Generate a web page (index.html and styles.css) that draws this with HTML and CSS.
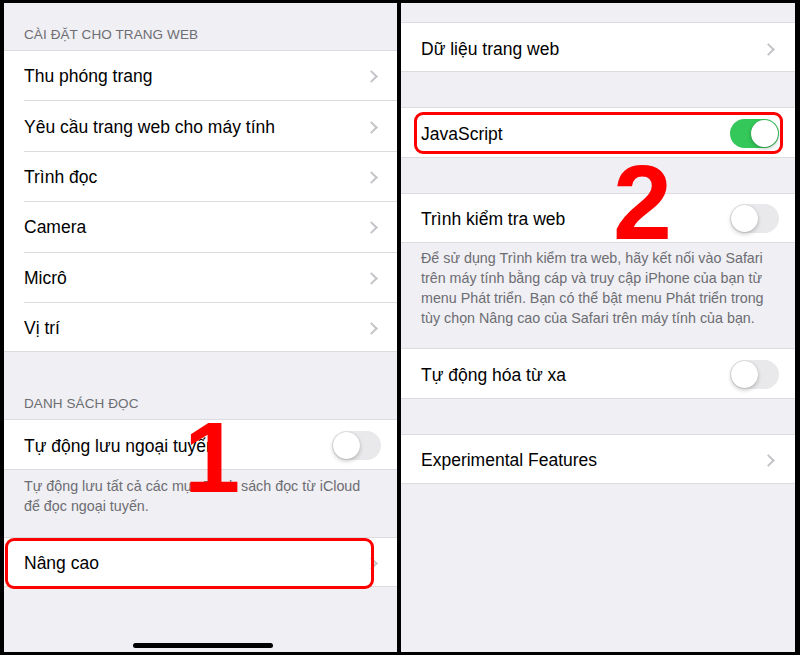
FILE: index.html
```html
<!DOCTYPE html>
<html lang="vi">
<head>
<meta charset="utf-8">
<link rel="stylesheet" href="styles.css">
</head>
<body>
<div class="frame">
  <section class="panel">
    <div class="header header-first">CÀI ĐẶT CHO TRANG WEB</div>
    <div class="group">
      <div class="row"><span class="label">Thu phóng trang</span><span class="chev"></span></div>
      <div class="row"><span class="label">Yêu cầu trang web cho máy tính</span><span class="chev"></span></div>
      <div class="row"><span class="label">Trình đọc</span><span class="chev"></span></div>
      <div class="row"><span class="label">Camera</span><span class="chev"></span></div>
      <div class="row"><span class="label">Micrô</span><span class="chev"></span></div>
      <div class="row"><span class="label">Vị trí</span><span class="chev"></span></div>
    </div>
    <div class="header header-second">DANH SÁCH ĐỌC</div>
    <div class="group">
      <div class="row"><span class="label">Tự động lưu ngoại tuyến</span><span class="toggle"></span></div>
    </div>
    <div class="footer footer-left">Tự động lưu tất cả các mục Danh sách đọc từ iCloud để đọc ngoại tuyến.</div>
    <div class="group">
      <div class="row"><span class="label">Nâng cao</span><span class="chev"></span></div>
    </div>
    <div class="mark mark-left"></div>
    <div class="num num-1">1</div>
    <div class="home"></div>
  </section>
  <section class="panel">
    <div class="gap gap-top"></div>
    <div class="group">
      <div class="row"><span class="label">Dữ liệu trang web</span><span class="chev chev-r"></span></div>
    </div>
    <div class="gap"></div>
    <div class="group">
      <div class="row"><span class="label">JavaScript</span><span class="toggle on"></span></div>
    </div>
    <div class="gap"></div>
    <div class="group">
      <div class="row"><span class="label">Trình kiểm tra web</span><span class="toggle"></span></div>
    </div>
    <div class="footer footer-right">Để sử dụng Trình kiểm tra web, hãy kết nối vào Safari trên máy tính bằng cáp và truy cập iPhone của bạn từ menu Phát triển. Bạn có thể bật menu Phát triển trong tùy chọn Nâng cao của Safari trên máy tính của bạn.</div>
    <div class="group">
      <div class="row"><span class="label">Tự động hóa từ xa</span><span class="toggle"></span></div>
    </div>
    <div class="gap"></div>
    <div class="group">
      <div class="row"><span class="label">Experimental Features</span><span class="chev chev-r"></span></div>
    </div>
    <div class="mark mark-right"></div>
    <div class="num num-2">2</div>
  </section>
</div>
</body>
</html>
```
FILE: styles.css
```css
* { box-sizing: border-box; }
html, body {
  margin: 0;
  padding: 0;
  background: #000;
}
body {
  width: 800px;
  height: 655px;
  overflow: hidden;
  font-family: "Liberation Sans", Arial, sans-serif;
}
.frame {
  display: grid;
  grid-template-columns: 393px 394px;
  column-gap: 4px;
  padding: 3px 5px 3px 4px;
  height: 655px;
}
.panel {
  position: relative;
  background: #efeff4;
  overflow: hidden;
}
.header {
  color: #6d6d72;
  font-size: 13.5px;
  letter-spacing: 0.1px;
  padding: 0 20px 8px;
  display: flex;
  align-items: flex-end;
}
.header-first { height: 47px; }
.header-second { height: 67px; padding-bottom: 8px; }
.group {
  background: #fff;
  border-top: 1px solid #dcdce0;
  border-bottom: 1px solid #dcdce0;
}
.row {
  height: 50.4px;
  margin-left: 20px;
  padding-right: 18px;
  padding-top: 2px;
  display: flex;
  align-items: center;
  justify-content: space-between;
  border-bottom: 1px solid #dcdce0;
}
.group .row:last-child { border-bottom: none; height: 48.4px; }
.group .row:only-child { padding-top: 4px; }
.label {
  font-size: 17.5px;
  color: #000;
}
.chev {
  width: 9px;
  height: 9px;
  border-top: 2px solid #c4c4c8;
  border-right: 2px solid #c4c4c8;
  transform: rotate(45deg);
  margin-right: 3px;
}
.chev-r { margin-right: 4px; }
.toggle {
  position: relative;
  width: 49px;
  height: 29px;
  border-radius: 15px;
  background: #e9e9eb;
  margin-right: -2px;
  margin-top: -2px;
}
.toggle::after {
  content: "";
  position: absolute;
  top: 1px;
  left: 1px;
  width: 27px;
  height: 27px;
  border-radius: 50%;
  background: #fff;
  box-shadow: 0 2px 4px rgba(0,0,0,0.22), 0 0 1px rgba(0,0,0,0.2);
}
.toggle.on { background: #34c759; }
.toggle.on::after { left: 21px; }
.footer {
  color: #6d6d72;
  font-size: 14.3px;
  line-height: 20px;
  padding: 6px 20px 0 20px;
}
.footer-left { height: 67px; padding-right: 24px; }
.footer-right { height: 105px; padding-top: 5px; padding-right: 22px; }
.gap { height: 35px; }
.gap-top { height: 19px; }
.mark {
  position: absolute;
  border: 3px solid #ff0000;
  border-radius: 9px;
}
.mark-left { left: 1px; top: 535px; width: 369px; height: 51px; }
.mark-right { left: 13px; top: 109px; width: 369px; height: 42px; }
.num {
  position: absolute;
  color: #ff0000;
  font-family: "Liberation Sans", Arial, sans-serif;
  font-weight: 700;
  line-height: 1;
}
.num-1 { left: 180px; top: 404px; font-size: 101px; }
.num-2 { left: 212px; top: 146px; font-size: 106px; }
.home {
  position: absolute;
  left: 129px;
  bottom: 4px;
  width: 140px;
  height: 5px;
  border-radius: 3px;
  background: #000;
}
```
